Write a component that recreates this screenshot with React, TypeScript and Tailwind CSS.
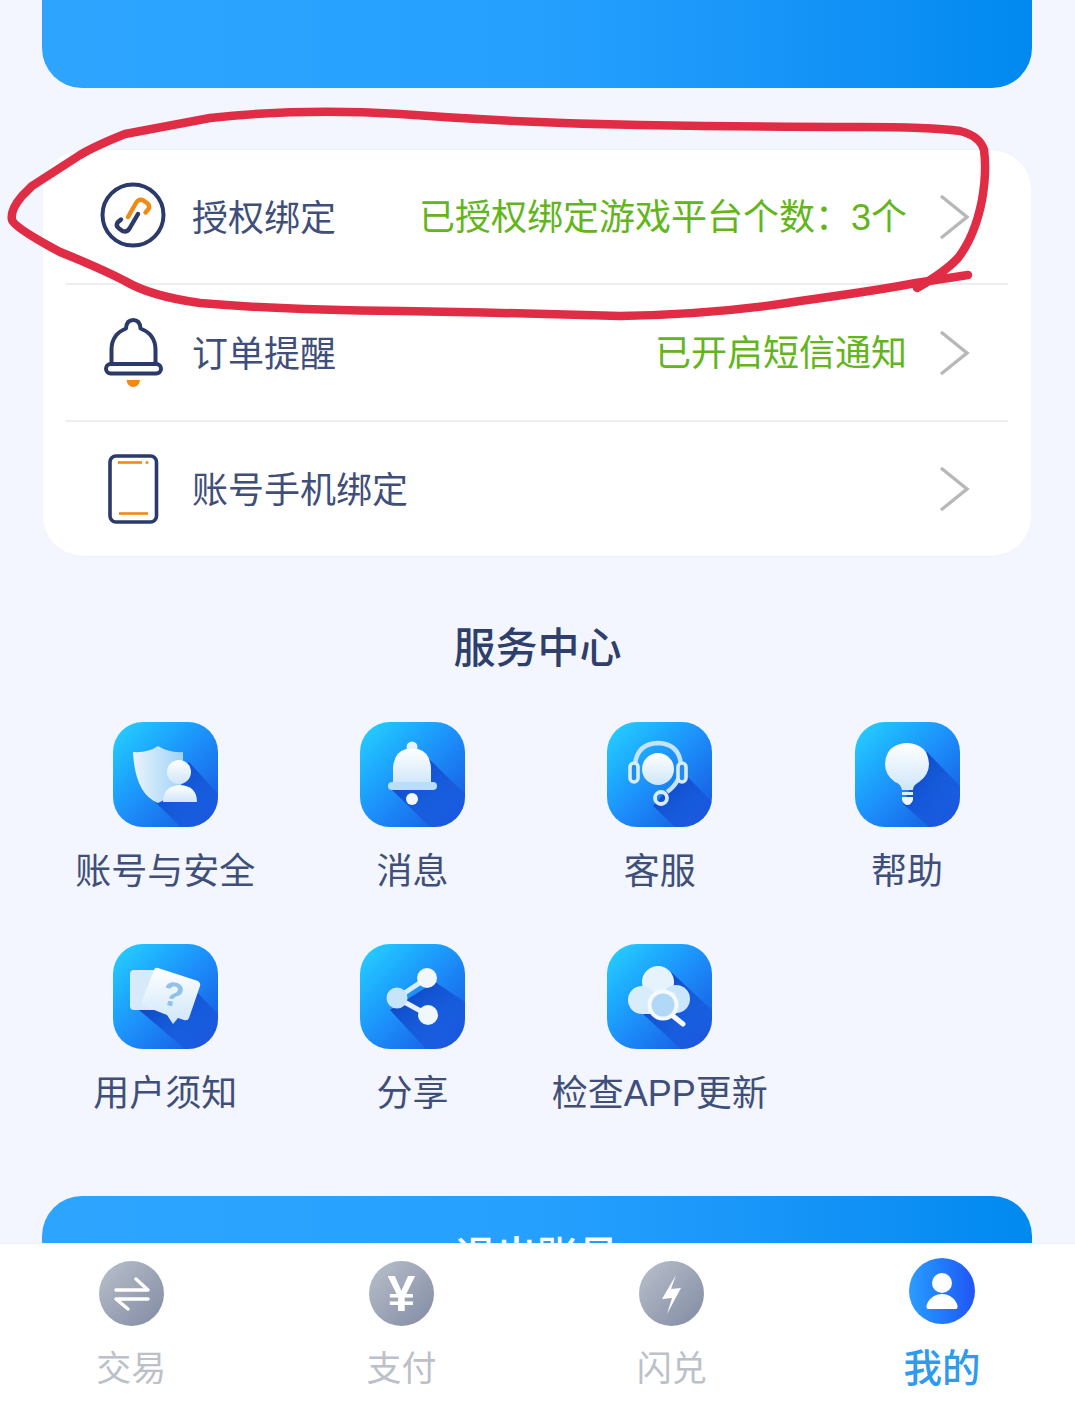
import type { ReactNode } from 'react'

const NAVY = '#2b3a6b'
const ORANGE = '#f08a12'

function Chevron() {
  return (
    <svg width="34" height="48" viewBox="0 0 34 48" fill="none" className="shrink-0">
      <path d="M4 3 L30 24 L4 45" stroke="#b8b8b8" strokeWidth="3.4" />
    </svg>
  )
}

function LinkIcon() {
  return (
    <svg width="66" height="70" viewBox="0 0 66 70" fill="none" strokeLinecap="round" strokeLinejoin="round">
      <circle cx="33" cy="33" r="30.5" stroke={NAVY} strokeWidth="4" />
      <path d="M28 35 L36 21 Q39 16 43.5 18.5 L47 21 Q50.5 23.5 48.5 27 L45.5 30.5" stroke={ORANGE} strokeWidth="4.4" />
      <path d="M38 32 L29.5 46.5 Q27 50.5 22.5 49 L19 46.5 Q15.5 44 17.5 40.5 L21 37.5" stroke={NAVY} strokeWidth="4.4" />
    </svg>
  )
}

function BellIcon() {
  return (
    <svg width="66" height="70" viewBox="0 0 66 70" fill="none" strokeLinejoin="round">
      <path
        d="M11.5 46 V31 Q12 16 26 10.5 Q26.5 2 33.3 2 Q40 2 40.5 10.5 Q55 16 55.5 31 V46"
        stroke={NAVY}
        strokeWidth="4"
      />
      <rect x="6" y="46" width="55" height="9.5" rx="4.7" stroke={NAVY} strokeWidth="4" fill="#fff" />
      <path d="M26.5 62 H40 Q39 69 33.3 69 Q27.5 69 26.5 62 Z" fill={ORANGE} />
    </svg>
  )
}

function PhoneIcon() {
  return (
    <svg width="66" height="70" viewBox="0 0 66 70" fill="none">
      <rect x="10" y="2" width="46.5" height="66" rx="6" stroke={NAVY} strokeWidth="3.6" />
      <path d="M18 8.5 H42" stroke={ORANGE} strokeWidth="2.6" />
      <circle cx="47" cy="8.5" r="1.5" fill={ORANGE} />
      <path d="M19 59.5 H48" stroke={ORANGE} strokeWidth="2.6" />
    </svg>
  )
}

function SettingRow({ icon, label, value }: { icon: ReactNode; label: string; value?: string }) {
  return (
    <div className="flex h-full items-center pl-[57px] pr-[60px]">
      <div className="flex w-[66px] shrink-0 items-center justify-center">{icon}</div>
      <span className="ml-[26px] mt-[4px] text-[36px] leading-none text-[#3f4f7a]">{label}</span>
      <span className="ml-auto mr-[30px] mt-[2px] whitespace-nowrap text-[36px] leading-none text-[#62b51b]">{value}</span>
      <Chevron />
    </div>
  )
}

/* App tile: gradient square, long shadow behind the white glyph */
function Tile({ shadow, children }: { shadow: string; children: ReactNode }) {
  return (
    <div className="h-[105px] w-[105px] overflow-hidden rounded-[30px] bg-linear-to-br from-[#2ad3ff] via-[#1d8ffa] to-[#1c4fdc]">
      <svg width="105" height="105" viewBox="0 0 105 105" fill="none">
        <defs>
          <linearGradient id="glyph" x1="0" y1="0" x2="0" y2="1">
            <stop offset="0" stopColor="#ffffff" />
            <stop offset="1" stopColor="#cfe6fa" />
          </linearGradient>
          <linearGradient id="shield" x1="1" y1="0" x2="0" y2="0">
            <stop offset="0" stopColor="#9fd2f6" />
            <stop offset="1" stopColor="#e9f4fd" />
          </linearGradient>
          <linearGradient id="shade" x1="0" y1="0" x2="1" y2="1">
            <stop offset="0.2" stopColor="#0e44c4" stopOpacity="0.95" />
            <stop offset="1" stopColor="#1b50dc" stopOpacity="0.15" />
          </linearGradient>
        </defs>
        <polygon points={shadow} fill="url(#shade)" />
        {children}
      </svg>
    </div>
  )
}

const services: { label: string; shadow: string; glyph: ReactNode }[] = [
  {
    label: '账号与安全',
    shadow: '76,40 105,72 105,105 68,105 38,76',
    glyph: (
      <>
        <path d="M20 30 Q35 31 45 24 Q56 31 70 30 V60 Q62 74 45 81 Q22 72 20 30 Z" fill="url(#shield)" />
        <circle cx="66" cy="50" r="12" fill="url(#glyph)" />
        <path d="M50 80 Q50 64 67 63 Q84 64 84 80 Z" fill="url(#glyph)" />
      </>
    ),
  },
  {
    label: '消息',
    shadow: '68,36 105,72 105,105 70,105 30,66',
    glyph: (
      <>
        <circle cx="52" cy="25" r="5.5" fill="#e6f3fd" />
        <path d="M33 62 V46 Q34 30 46 27 H58 Q70 30 71 46 V62 Z" fill="url(#glyph)" />
        <rect x="28" y="60" width="49" height="8" rx="4" fill="#b9def8" />
        <circle cx="52" cy="77" r="6" fill="#f2f8fe" />
      </>
    ),
  },
  {
    label: '客服',
    shadow: '76,50 105,80 105,105 68,105 46,84',
    glyph: (
      <>
        <circle cx="51" cy="47" r="16" fill="url(#glyph)" />
        <path d="M28 44 Q29 22 51 21 Q73 22 74 44 Q74 60 60 70" stroke="#c4e3f9" strokeWidth="4.4" />
        <rect x="23" y="41" width="8" height="19" rx="4" fill="#1f8df5" stroke="#d8edfc" strokeWidth="3.6" />
        <rect x="71" y="41" width="8" height="19" rx="4" fill="#1f8df5" stroke="#d8edfc" strokeWidth="3.6" />
        <circle cx="54" cy="76" r="6" stroke="#d8edfc" strokeWidth="3.8" />
      </>
    ),
  },
  {
    label: '帮助',
    shadow: '72,30 105,64 105,105 74,105 48,82',
    glyph: (
      <>
        <path
          d="M47 68 Q46 62 40 60 Q30 53 30 42 Q31 22 52 21 Q73 22 74 42 Q74 53 64 60 Q58 63 58 68 Z"
          fill="url(#glyph)"
        />
        <rect x="47" y="70" width="11" height="3" fill="#d8edfc" />
        <path d="M47 75 H58 V78 Q56 83 52.5 83 Q49 83 47 78 Z" fill="#eef7fe" />
      </>
    ),
  },
  {
    label: '用户须知',
    shadow: '80,44 105,70 105,105 72,105 26,66',
    glyph: (
      <>
        <rect x="17" y="26" width="36" height="40" rx="4" fill="#d6eafa" />
        <path
          d="M45 24 L85 37 Q88 39 87 42 L76 74 Q75 77 71 76 L65 74 L60 80 L54 71 L31 62 Q28 60 29 57 L41 26 Q42 23 45 24 Z"
          fill="url(#glyph)"
        />
        <text
          x="60"
          y="62"
          fontSize="34"
          fontWeight="700"
          fontFamily="'Liberation Sans', sans-serif"
          fill="#8fc2e6"
          transform="rotate(14 60 50)"
          textAnchor="middle"
        >
          ?
        </text>
      </>
    ),
  },
  {
    label: '分享',
    shadow: '75,38 105,58 105,105 66,105 30,66',
    glyph: (
      <>
        <path d="M37 54 L67 34" stroke="#d8edfc" strokeWidth="5" />
        <path d="M37 54 L68 71" stroke="#e6f3fd" strokeWidth="5" />
        <circle cx="67" cy="34" r="10" fill="#f0f7fd" />
        <circle cx="68" cy="71" r="10" fill="#f0f7fd" />
        <circle cx="37" cy="54" r="10.5" fill="#c6e4fa" />
      </>
    ),
  },
  {
    label: '检查APP更新',
    shadow: '64,28 105,66 105,105 74,105 36,70',
    glyph: (
      <>
        <circle cx="51" cy="38" r="16" fill="#e6f3fd" />
        <circle cx="35" cy="56" r="14" fill="#d8edfc" />
        <circle cx="69" cy="55" r="14" fill="#cbe6fa" />
        <rect x="35" y="48" width="34" height="22" fill="#d8edfc" />
        <circle cx="56" cy="61" r="13.5" fill="#b1d9f7" stroke="#f4fafe" strokeWidth="4" />
        <path d="M66 72 L76 80" stroke="#f4fafe" strokeWidth="5" strokeLinecap="round" />
      </>
    ),
  },
]

function TabCircle({ children }: { children: ReactNode }) {
  return (
    <div className="h-[65px] w-[65px] rounded-full bg-linear-to-br from-[#bac0cc] to-[#818ba2]">
      <svg width="65" height="65" viewBox="0 0 65 65" fill="none">
        {children}
      </svg>
    </div>
  )
}

function Tab({ icon, label, active }: { icon: ReactNode; label: string; active?: boolean }) {
  return (
    <div className="flex flex-col items-center">
      <div className={active ? 'mt-[14px]' : 'mt-[17px]'}>{icon}</div>
      {active ? (
        <span className="mt-[20px] text-[38.5px] leading-[50px] font-medium text-[#2f9bef]">{label}</span>
      ) : (
        <span className="mt-[18px] text-[35px] leading-[50px] text-[#bcc0c8]">{label}</span>
      )}
    </div>
  )
}

export default function App() {
  return (
    <div className="relative h-[1402px] w-[1075px] overflow-hidden bg-white font-['Liberation_Sans','Noto_Sans_CJK_SC',sans-serif]">
      <div className="h-[1243px] overflow-hidden bg-[#f3f6fe]">
        {/* Tail of the balance banner */}
        <div className="ml-[42px] h-[88px] w-[990px] rounded-b-[40px] bg-linear-to-r from-[#2da5ff] via-[#25a0ff] to-[#0089f0]" />

        {/* Settings list */}
        <div className="ml-[43px] mt-[61px] grid h-[408px] w-[988px] grid-rows-[134px_138px_134px] rounded-[40px] border-t border-b border-[#edf1f9] bg-white">
          <SettingRow icon={<LinkIcon />} label="授权绑定" value="已授权绑定游戏平台个数：3个" />
          <div className="relative">
            <div className="absolute inset-x-[23px] -top-[1px] h-[2px] bg-[#eeeeef]" />
            <SettingRow icon={<BellIcon />} label="订单提醒" value="已开启短信通知" />
            <div className="absolute inset-x-[23px] bottom-0 h-[2px] bg-[#eeeeef]" />
          </div>
          <SettingRow icon={<PhoneIcon />} label="账号手机绑定" />
        </div>

        <h2 className="mt-[62px] text-center text-[42px] leading-[60px] font-medium text-[#2e3f6c]">服务中心</h2>

        {/* Service grid */}
        <div className="mt-[43px] ml-[41.5px] grid auto-rows-[222px] grid-cols-[repeat(4,247.3px)]">
          {services.map(s => (
            <div key={s.label} className="flex flex-col items-center">
              <Tile shadow={s.shadow}>{s.glyph}</Tile>
              <span className="mt-[23px] whitespace-nowrap text-[36px] leading-[44px] text-[#3f4f7a]">{s.label}</span>
            </div>
          ))}
        </div>

        <div className="ml-[42px] mt-[30px] flex h-[124px] w-[990px] items-center justify-center rounded-t-[40px] bg-linear-to-r from-[#2da5ff] via-[#25a0ff] to-[#0089f0] text-[41px] font-medium text-white">
          退出账号
        </div>
      </div>

      {/* Tab bar */}
      <div className="-ml-[4px] grid h-[159px] w-[1085px] grid-cols-[repeat(4,270.3px)] border-t border-[#f0f1f4] bg-white">
        <Tab
          label="交易"
          icon={
            <TabCircle>
              <g stroke="#fff" strokeWidth="3.4" strokeLinecap="round" strokeLinejoin="round">
                <path d="M17 29 H49 L37 18" />
                <path d="M49 38 H17 L29 48" />
              </g>
            </TabCircle>
          }
        />
        <Tab
          label="支付"
          icon={
            <div className="flex h-[65px] w-[65px] items-center justify-center rounded-full bg-linear-to-br from-[#bac0cc] to-[#818ba2] text-[50px] leading-none font-bold text-white">
              ¥
            </div>
          }
        />
        <Tab
          label="闪兑"
          icon={
            <TabCircle>
              <path d="M37 14 L23 38 L33 37 L28 53 L42 27 L32 28 Z" fill="#fff" />
            </TabCircle>
          }
        />
        <Tab
          active
          label="我的"
          icon={
            <div className="h-[66px] w-[66px] rounded-full bg-linear-to-r from-[#2b9dff] to-[#2254f5]">
              <svg width="66" height="66" viewBox="0 0 66 66" fill="#fff">
                <circle cx="33" cy="25" r="10" />
                <path d="M18.5 51 Q16 49 19 44 Q24 36 33 36 Q42 36 47 44 Q50 49 47.5 51 Z" />
              </svg>
            </div>
          }
        />
      </div>

      {/* Hand-drawn red marker over the first row */}
      <svg
        className="pointer-events-none absolute left-0 top-0"
        width="1075"
        height="340"
        viewBox="0 0 1075 340"
        fill="none"
        stroke="#e12c45"
        strokeWidth="8.5"
        strokeLinecap="round"
        strokeLinejoin="round"
      >
        <path d="M917 288 Q945 272 958 258 Q975 236 982 200 Q987 172 984 150 Q980 136 960 131 Q930 127 860 127 Q760 127 640 125 Q520 123 400 114 Q300 108 210 118 L125 134 Q95 146 80 155 L32 186 L22 196 Q10 210 12 220 Q15 228 60 252 Q100 268 125 281 Q150 296 200 303 Q280 310 400 311 Q520 313 620 316 Q720 314 800 301 Q880 290 916 283 L968 275" />
      </svg>
    </div>
  )
}
